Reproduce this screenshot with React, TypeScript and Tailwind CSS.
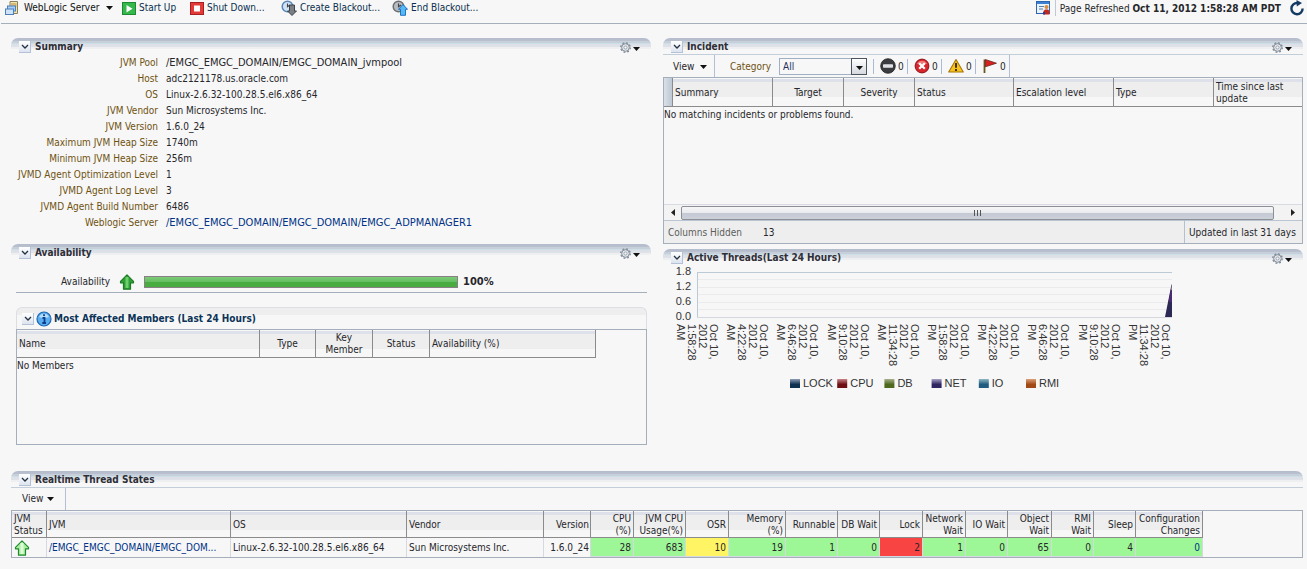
import React from "react";

const HEAD_BG =
  "bg-[linear-gradient(to_bottom,#f7f7f7_0px,#f7f7f7_1px,#dfe1ea_1px,#dfe1ea_4px,#eeeeee_4px,#eeeeee_19px,#f7f7f7_19px)]";

function Caret({ className = "" }: { className?: string }) {
  return (
    <svg className={`h-1 w-[7px] shrink-0 ${className}`} viewBox="0 0 7 4" aria-hidden="true">
      <path d="M0 0H7L3.500 4Z" fill="#111" />
    </svg>
  );
}

function Chevron() {
  return (
    <button
      type="button"
      aria-label="Collapse"
      className="flex size-3 shrink-0 items-center justify-center border-r border-b border-[#b4c2d8] bg-[linear-gradient(to_bottom,#ffffff,#dde4ef)]"
    >
      <svg className="h-[5px] w-[8px]" viewBox="0 0 8 5" aria-hidden="true">
        <path d="M1 1L4 4L7 1" fill="none" stroke="#22303f" strokeWidth="1.3" />
      </svg>
    </button>
  );
}

function Gear() {
  return (
    <button type="button" aria-label="Panel options" className="flex items-center gap-[2px]">
      <svg className="size-[11px]" viewBox="0 0 12 12" aria-hidden="true">
        <circle cx="6" cy="6" r="5.200" fill="none" stroke="#7d8794" strokeWidth="1.4" strokeDasharray="2.042 2.042" />
        <circle cx="6" cy="6" r="4.200" fill="#e3e7ec" stroke="#76818e" strokeWidth="1" />
        <circle cx="6" cy="6" r="1.700" fill="#f7f7f7" stroke="#8e98a4" strokeWidth="0.900" />
      </svg>
      <Caret className="mt-1" />
    </button>
  );
}

function PanelHeader({ title, gear = true }: { title: string; gear?: boolean }) {
  return (
    <div className="flex h-4 items-center rounded-t-[7px] bg-[linear-gradient(to_bottom,#b4bccd_0px,#b9c1cf_3px,#c7cfda_3px,#c7cfda_5px,#cddfe6_5px,#cddfe6_6px,#dcdfe6_6px,#dfe2e8_9px,#eeeff1_9px,#eeeff1_11px,#f7f7f7_11px)] pt-[2px] pr-[11px] pl-2">
      <Chevron />
      <h2 className="grow pl-1 font-bold whitespace-nowrap text-[#2e2e36]">{title}</h2>
      {gear && <Gear />}
    </div>
  );
}

const SUMMARY: [string, string][] = [
  ["Host", "adc2121178.us.oracle.com"],
  ["OS", "Linux-2.6.32-100.28.5.el6.x86_64"],
  ["JVM Vendor", "Sun Microsystems Inc."],
  ["JVM Version", "1.6.0_24"],
  ["Maximum JVM Heap Size", "1740m"],
  ["Minimum JVM Heap Size", "256m"],
  ["JVMD Agent Optimization Level", "1"],
  ["JVMD Agent Log Level", "3"],
  ["JVMD Agent Build Number", "6486"],
];

function Summary() {
  return (
    <section>
      <PanelHeader title="Summary" />
      <dl className="grid grid-cols-[147px_1fr] gap-x-2 pt-px leading-4 whitespace-nowrap">
        <dt className="text-right text-[#6f5210]">JVM Pool</dt>
        <dd className="text-[11px]">/EMGC_EMGC_DOMAIN/EMGC_DOMAIN_jvmpool</dd>
        {SUMMARY.map(([k, v]) => (
          <React.Fragment key={k}>
            <dt className="text-right text-[#6f5210]">{k}</dt>
            <dd>{v}</dd>
          </React.Fragment>
        ))}
        <dt className="text-right text-[#6f5210]">Weblogic Server</dt>
        <dd className="text-[11px]">
          <a href="#server" className="text-[#003286]">
            /EMGC_EMGC_DOMAIN/EMGC_DOMAIN/EMGC_ADPMANAGER1
          </a>
        </dd>
      </dl>
    </section>
  );
}

function UpArrow({ light = false }: { light?: boolean }) {
  return (
    <svg className="size-4 shrink-0" viewBox="0 0 16 16" role="img" aria-label="Up">
      <path
        d="M8 0.800L14.500 7.300V8.800H11.500V15.200H4.500V8.800H1.500V7.300Z"
        fill={light ? "#a9efa0" : "#2fa136"}
        stroke={light ? "#1f8a2b" : "#1d7a25"}
        strokeWidth="1.2"
        strokeLinejoin="round"
      />
      <path d="M8 3V14" stroke={light ? "#e0fbda" : "#6fcf6a"} strokeWidth="3" />
    </svg>
  );
}

function Availability() {
  const th = `h-7 border-r border-b border-[#8b8b8b] pt-px font-normal whitespace-pre-line ${HEAD_BG}`;
  return (
    <section>
      <PanelHeader title="Availability" />
      <div className="mr-1 ml-[5px]">
        <div className="flex h-[33px] items-center border-b border-[#a5aebb] pt-3 pl-[45px]">
          <span className="w-[58px]">Availability</span>
          <UpArrow />
          <div className="ml-[9px] h-3 w-[314px] border border-[#8a7f85] bg-[linear-gradient(to_bottom,#7ccb78_0px,#63bd5f_5px,#48ac41_5px,#48ac41_100%)]" />
          <span className="pl-[5px] text-[11px] font-bold">100%</span>
        </div>
        <div className="mt-[14px] flex h-[22px] items-center rounded-t-[6px] border-x border-t border-[#dcdee4] bg-[linear-gradient(to_bottom,#eeeeee_0px,#eeeeee_7px,#f7f7f7_7px)] pl-[5px]">
          <Chevron />
          <svg className="ml-[2px] size-4" viewBox="0 0 16 16" aria-hidden="true">
            <circle cx="8" cy="8" r="7" fill="#5aaef0" stroke="#1c66b4" strokeWidth="1.2" />
            <path d="M3 6A5.400 5.400 0 0 1 13 6Q8 8 3 6Z" fill="#b5dcfa" />
            <path d="M8 3.200V5M6.500 7H8.500V12M6.300 12H10" stroke="#0c3f8c" strokeWidth="1.800" fill="none" />
          </svg>
          <h3 className="pl-[2px] font-bold whitespace-nowrap text-[#0b3357]">Most Affected Members (Last 24 Hours)</h3>
        </div>
        <div className="h-[116px] border border-[#a5aebb]">
          <table className="w-[579px] table-fixed border-separate border-spacing-0 leading-3">
            <colgroup>
              <col className="w-[243px]" />
              <col className="w-[56px]" />
              <col className="w-[57px]" />
              <col className="w-[57px]" />
              <col className="w-[166px]" />
            </colgroup>
            <thead>
              <tr>
                <th className={`${th} pl-[2px] text-left`}>Name</th>
                <th className={th}>Type</th>
                <th className={th}>{"Key\nMember"}</th>
                <th className={th}>Status</th>
                <th className={`${th} pl-[2px] text-left`}>Availability (%)</th>
              </tr>
            </thead>
            <tbody>
              <tr>
                <td colSpan={5} className="h-4">
                  No Members
                </td>
              </tr>
            </tbody>
          </table>
        </div>
      </div>
    </section>
  );
}

function CountIcon({ kind }: { kind: "fatal" | "critical" | "warning" | "escalated" }) {
  if (kind === "fatal")
    return (
      <svg className="size-4" viewBox="0 0 16 16" role="img" aria-label="Fatal">
        <circle cx="8" cy="8" r="7.300" fill="#3a3c40" stroke="#222" strokeWidth="0.800" />
        <rect x="3" y="6.300" width="10" height="3.400" rx="0.800" fill="#dfe1e4" />
      </svg>
    );
  if (kind === "critical")
    return (
      <svg className="size-4" viewBox="0 0 16 16" role="img" aria-label="Critical">
        <circle cx="8" cy="8" r="6.900" fill="#d6252b" stroke="#8e1519" strokeWidth="1" />
        <path d="M3 6A5.500 5.500 0 0 1 13 6Z" fill="#ee7a78" />
        <path d="M5.200 5.200L10.800 10.800M10.800 5.200L5.200 10.800" stroke="#fff" strokeWidth="2.300" />
      </svg>
    );
  if (kind === "warning")
    return (
      <svg className="size-4" viewBox="0 0 16 16" role="img" aria-label="Warning">
        <path d="M8 1.500L15.300 14H0.700Z" fill="#f7c21d" stroke="#a87708" strokeWidth="1.100" strokeLinejoin="round" />
        <path d="M8 5V9.800M8 11V13" stroke="#3b2c05" strokeWidth="1.900" />
      </svg>
    );
  return (
    <svg className="size-4" viewBox="0 0 16 16" role="img" aria-label="Escalated">
      <path d="M2.500 1.500V15" stroke="#6a5420" strokeWidth="1.800" />
      <path d="M3.400 1.500L14.500 5.200L3.400 8.800Z" fill="#d8201f" stroke="#5a1a14" strokeWidth="0.700" />
    </svg>
  );
}

const KINDS = ["fatal", "critical", "warning", "escalated"] as const;

const INCIDENT_COLS: [string, boolean][] = [
  ["Summary", false],
  ["Target", true],
  ["Severity", true],
  ["Status", false],
  ["Escalation level", false],
  ["Type", false],
  ["Time since last\nupdate", false],
];

function Incident() {
  return (
    <section>
      <PanelHeader title="Incident" />
      <div className="flex h-[23px] items-center border-t border-[#c3cedb]">
        <button type="button" className="flex h-full w-[52px] items-center gap-[6px] border-r border-[#b3bfd2] pt-px pl-[10px]">
          View <Caret />
        </button>
        <label htmlFor="category" className="w-16 pt-px pl-[15px] text-[#6f5210]">
          Category
        </label>
        <div className="relative mr-[6px]">
          <select
            id="category"
            defaultValue="All"
            className="block h-[17px] w-[88px] appearance-none rounded-none border border-[#9fb0c4] bg-[#f7f7f7] pl-[3px] text-[10px] leading-[15px] text-[#22305e]"
          >
            <option>All</option>
          </select>
          <span className="pointer-events-none absolute top-0 right-0 flex h-[17px] w-4 items-center justify-center border border-[#4e545e] bg-[linear-gradient(to_bottom,#ffffff,#d5d9df)] pt-[3px]">
            <Caret />
          </span>
        </div>
        <div className="flex h-full items-center">
          {KINDS.map((k) => (
            <span key={k} className="flex w-[34px] items-center">
              <span className="mr-[6px] h-[15px] w-px bg-[#a9bbd6]" />
              <CountIcon kind={k} />
              <span className="pt-px pl-[2px]">0</span>
            </span>
          ))}
          <span className="h-full w-px bg-[#b3bfd2]" />
        </div>
      </div>
      <div className="border border-[#a5aebb]">
        <div className="h-[127px] border-b border-[#d9dbe3]">
          <table className="w-full table-fixed border-separate border-spacing-0 leading-3">
            <colgroup>
              <col className="w-[9px]" />
              <col className="w-[100px]" />
              <col className="w-[71px]" />
              <col className="w-[71px]" />
              <col className="w-[99px]" />
              <col className="w-[100px]" />
              <col className="w-[100px]" />
              <col />
            </colgroup>
            <thead>
              <tr>
                <th
                  aria-label="Row header"
                  className="h-[29px] border-r border-b border-[#8b8b8b] bg-[linear-gradient(to_right,#d9e0e8,#bcc8d4)]"
                />
                {INCIDENT_COLS.map(([c, centre]) => (
                  <th
                    key={c}
                    className={`h-[29px] border-b border-[#8b8b8b] px-[2px] pt-px font-normal whitespace-pre-line not-last:border-r ${centre ? "text-center" : "text-left"} ${HEAD_BG}`}
                  >
                    {c}
                  </th>
                ))}
              </tr>
            </thead>
            <tbody>
              <tr>
                <td colSpan={8} className="h-4">
                  No matching incidents or problems found.
                </td>
              </tr>
            </tbody>
          </table>
        </div>
        <div className="flex h-[15px] items-center bg-[#f3f3f3]">
          <button type="button" aria-label="Scroll left" className="flex w-[17px] justify-center">
            <svg className="h-[7px] w-1" viewBox="0 0 4 7" aria-hidden="true">
              <path d="M4 0V7L0 3.500Z" fill="#222" />
            </svg>
          </button>
          <div className="flex h-[14px] grow items-center justify-center gap-[2px] rounded-[2px] border border-[#8c8f96] bg-[linear-gradient(to_bottom,#f6f6f7_0px,#e9eaed_6px,#c3c8d3_6px,#ccd0d9_100%)]">
            <span className="h-[6px] w-px bg-[#555]" />
            <span className="h-[6px] w-px bg-[#555]" />
            <span className="h-[6px] w-px bg-[#555]" />
          </div>
          <button type="button" aria-label="Scroll right" className="flex w-7 justify-center pl-[10px]">
            <svg className="h-[7px] w-1" viewBox="0 0 4 7" aria-hidden="true">
              <path d="M0 0V7L4 3.500Z" fill="#222" />
            </svg>
          </button>
        </div>
        <div className="flex h-[23px] items-center border-t border-[#b9c5d3] bg-[#eeeeee]">
          <span className="w-[99px] pt-px pl-1 text-[#5c5c5c]">Columns Hidden</span>
          <span className="grow pt-px">13</span>
          <span className="flex h-full w-[118px] items-center border-l border-[#b3bfd2] pt-px pl-1 whitespace-nowrap">
            Updated in last 31 days
          </span>
        </div>
      </div>
    </section>
  );
}

const TIMES: [string, string][] = [
  ["1:58:28", "AM"],
  ["4:22:28", "AM"],
  ["6:46:28", "AM"],
  ["9:10:28", "AM"],
  ["11:34:28", "AM"],
  ["1:58:28", "PM"],
  ["4:22:28", "PM"],
  ["6:46:28", "PM"],
  ["9:10:28", "PM"],
  ["11:34:28", "PM"],
];

const LEGEND: [string, string, string][] = [
  ["LOCK", "#8f9db5", "#0d2f50"],
  ["CPU", "#c98488", "#6e1013"],
  ["DB", "#a9b08c", "#4f6a1f"],
  ["NET", "#a79fc4", "#2f2560"],
  ["IO", "#8fb9c4", "#215d80"],
  ["RMI", "#dca178", "#a24a16"],
];

function ActiveThreads() {
  return (
    <section>
      <PanelHeader title="Active Threads(Last 24 Hours)" />
      <svg
        className="-mt-[3px] block h-auto w-full font-['Liberation_Sans',sans-serif] text-[11px]"
        viewBox="0 0 640 132"
        role="img"
        aria-label="Active threads over the last 24 hours"
      >
        {[0, 1, 2, 3, 4].map((i) => (
          <rect key={i} x="35" y={17 + Math.round(i * 7.5)} width="474" height="1" fill="#ebebee" />
        ))}
        <rect x="34" y="10" width="475" height="1" fill="#bccad6" />
        <rect x="34" y="10" width="1" height="46" fill="#bccad6" />
        <rect x="34" y="55" width="475" height="1" fill="#d5d7df" />
        <path d="M502 55L508 25L509 22V55Z" fill="#2c2a55" />
        <path d="M505.500 40L509 22V40Z" fill="#4a2a72" />
        <path d="M507.700 28L509 22V28Z" fill="#8d7f86" />
        {["1.8", "1.2", "0.6", "0.0"].map((t, i) => (
          <text key={t} x="28" y={13 + i * 15} textAnchor="end" fill="#333">
            {t}
          </text>
        ))}
        {TIMES.map(([time, half], i) => (
          <g key={i} fill="#333">
            {[half, time, "2012", "Oct 10,"].map((t, j) => (
              <text key={j} transform={`translate(${14 + i * 50 + Math.round(i / 5) + j * 11} 62) rotate(90)`}>
                {t}
              </text>
            ))}
          </g>
        ))}
        <defs>
          {LEGEND.map(([n, a, b]) => (
            <linearGradient key={n} id={`sw-${n}`} x1="0" y1="0" x2="0" y2="1">
              <stop offset="0" stopColor={a} />
              <stop offset="0.6" stopColor={b} />
              <stop offset="1" stopColor={b} />
            </linearGradient>
          ))}
        </defs>
        {LEGEND.map(([n], i) => (
          <g key={n}>
            <rect x={127 + i * 47.2} y="117" width="10" height="9" fill={`url(#sw-${n})`} />
            <text x={140 + i * 47.2} y="125" fill="#333">
              {n}
            </text>
          </g>
        ))}
      </svg>
    </section>
  );
}

type Tone = "green" | "yellow" | "red";
const TONES: Record<Tone, string> = {
  green: "bg-[#9ef796]",
  yellow: "bg-[#fff464]",
  red: "bg-[#f94444]",
};

const STATES: [string, string, Tone, string][] = [
  ["CPU\n(%)", "28", "green", "w-[43px]"],
  ["JVM CPU\nUsage(%)", "683", "green", "w-[52px]"],
  ["OSR", "10", "yellow", "w-[43px]"],
  ["Memory\n(%)", "19", "green", "w-[57px]"],
  ["Runnable", "1", "green", "w-[52px]"],
  ["DB Wait", "0", "green", "w-[42px]"],
  ["Lock", "2", "red", "w-[43px]"],
  ["Network\nWait", "1", "green", "w-[43px]"],
  ["IO Wait", "0", "green", "w-[42px]"],
  ["Object\nWait", "65", "green", "w-[44px]"],
  ["RMI\nWait", "0", "green", "w-[42px]"],
  ["Sleep", "4", "green", "w-[42px]"],
  ["Configuration\nChanges", "0", "green", "w-[67px]"],
];

function ThreadStates() {
  const th = `h-[27px] border-r border-b border-[#8b8b8b] pt-[2px] font-normal whitespace-pre-line ${HEAD_BG}`;
  const td = "h-[19px] border-r border-[#d6d9e2] whitespace-nowrap";
  return (
    <section>
      <PanelHeader title="Realtime Thread States" gear={false} />
      <div className="flex h-[23px] border-t border-[#c3cedb]">
        <button type="button" className="flex w-[55px] items-center gap-1 border-r border-[#b3bfd2] pl-[11px]">
          View <Caret />
        </button>
      </div>
      <div className="border border-[#a5aebb]">
        <table className="w-full table-fixed border-separate border-spacing-0 leading-3">
          <colgroup>
            <col className="w-[35px]" />
            <col className="w-[184px]" />
            <col className="w-[176px]" />
            <col className="w-[137px]" />
            <col className="w-[47px]" />
            {STATES.map(([n, , , w]) => (
              <col key={n} className={w} />
            ))}
            <col />
          </colgroup>
          <thead>
            <tr>
              <th className={`${th} pl-[2px] text-left`}>{"JVM\nStatus"}</th>
              <th className={`${th} pl-[2px] text-left`}>JVM</th>
              <th className={`${th} pl-[2px] text-left`}>OS</th>
              <th className={`${th} pl-[2px] text-left`}>Vendor</th>
              <th className={`${th} pr-px text-right`}>Version</th>
              {STATES.map(([n]) => (
                <th key={n} className={`${th} pr-[2px] text-right`}>
                  {n}
                </th>
              ))}
              <td />
            </tr>
          </thead>
          <tbody>
            <tr>
              <td className={`${td} pl-[2px]`}>
                <UpArrow light />
              </td>
              <td className={`${td} pt-px pl-[2px]`}>
                <a href="#jvm" className="text-[#003286]">
                  /EMGC_EMGC_DOMAIN/EMGC_DOM...
                </a>
              </td>
              <td className={`${td} pt-px pl-[2px]`}>Linux-2.6.32-100.28.5.el6.x86_64</td>
              <td className={`${td} pt-px pl-[2px]`}>Sun Microsystems Inc.</td>
              <td className={`${td} pt-px pr-px text-right`}>1.6.0_24</td>
              {STATES.map(([n, v, tone], i) => (
                <td key={n} className={`${td} border-b pt-[2px] pr-[2px] text-right ${TONES[tone]}`}>
                  {i === STATES.length - 1 ? (
                    <a href="#changes" className="text-[#003286]">
                      {v}
                    </a>
                  ) : (
                    v
                  )}
                </td>
              ))}
              <td />
            </tr>
          </tbody>
        </table>
      </div>
    </section>
  );
}

function ClockIcon({ up = false }: { up?: boolean }) {
  return (
    <svg className="size-4 shrink-0" viewBox="0 0 16 16" aria-hidden="true">
      <circle cx="6.500" cy="6.500" r="5.300" fill={up ? "#b9bcc0" : "#cfe3f5"} stroke={up ? "#6d7073" : "#5b86b5"} strokeWidth="1.500" />
      <path d="M6.500 3.500V6.800L9 5" fill="none" stroke="#444" strokeWidth="1.100" />
      {up ? (
        <path d="M11 4.500L15.500 9.300H13.500V15.300H8.500V9.300H6.500Z" fill="#55b8f7" stroke="#1468b8" strokeWidth="0.900" />
      ) : (
        <path d="M11 15.500L6.500 11H8.500V5H13.500V11H15.500Z" fill="#7b8086" stroke="#33373c" strokeWidth="0.900" />
      )}
    </svg>
  );
}

function TopBar() {
  const item = "flex items-center gap-[3px] whitespace-nowrap text-[#0b2f4f]";
  return (
    <header className="ml-px flex h-6 items-start justify-between border-b border-[#a5aebb] pr-[2px] pl-1">
      <nav className="flex h-4 items-center" aria-label="Server actions">
        <button type="button" className={`${item} mr-[9px] w-[108px]`}>
          <svg className="mr-[2px] size-[14px] shrink-0" viewBox="0 0 14 14" aria-hidden="true">
            <path d="M5 0.500H12.500V12.500H5Z" fill="#f3e3ae" stroke="#8b7f5a" />
            <path d="M6 3H11.500M6 5H11.500" stroke="#b98f3a" />
            <rect x="2.500" y="5" width="8" height="5" fill="#a9cdf2" stroke="#4d7fbd" />
            <rect x="0.500" y="8" width="8" height="5.500" fill="#cfe3f8" stroke="#4d7fbd" />
          </svg>
          <span className="grow text-left text-[#111]">WebLogic Server</span>
          <Caret />
        </button>
        <button type="button" className={`${item} mr-[13px] w-[55px]`}>
          <svg className="size-[14px] shrink-0" viewBox="0 0 14 14" aria-hidden="true">
            <rect x="0.500" y="1.500" width="13" height="12" fill="#35b84b" stroke="#1d8a33" />
            <path d="M4.500 4V11.500L10.500 7.700Z" fill="#fff" />
          </svg>
          Start Up
        </button>
        <button type="button" className={`${item} mr-[13px] w-[78px]`}>
          <svg className="size-[14px] shrink-0" viewBox="0 0 14 14" aria-hidden="true">
            <rect x="0.500" y="1.500" width="13" height="12" fill="#e23a38" stroke="#a91f20" />
            <rect x="4" y="4.500" width="6" height="6" fill="#fff" />
          </svg>
          Shut Down...
        </button>
        <button type="button" className={`${item} mr-[13px] w-[98px]`}>
          <ClockIcon />
          Create Blackout...
        </button>
        <button type="button" className={item}>
          <ClockIcon up />
          End Blackout...
        </button>
      </nav>
      <div className="flex h-4 items-center whitespace-nowrap">
        <svg className="mr-[5px] size-[14px]" viewBox="0 0 14 14" aria-hidden="true">
          <rect x="0.500" y="0.500" width="13" height="12" fill="#eaf2fb" stroke="#2d65b0" />
          <rect x="1" y="1" width="12" height="2" fill="#3d7fd0" />
          <path d="M3 5.500H8M3 8H7" stroke="#5a7ea8" />
          <circle cx="10.500" cy="6" r="2" fill="#d98c3a" />
          <path d="M7.500 13.500V10L9 8.500H12L13.500 10V13.500Z" fill="#c3261c" />
          <path d="M7 13.500V11H9V13.500Z" fill="#24408a" />
        </svg>
        <span className="mr-1 h-4 w-px bg-[#bccad6]" />
        <span className="pt-px">
          Page Refreshed <b>Oct 11, 2012 1:58:28 AM PDT</b>
        </span>
        <button type="button" aria-label="Refresh" className="ml-2">
          <svg className="block size-4" viewBox="0 0 16 16" aria-hidden="true">
            <path d="M13.600 8.500A5.600 5.600 0 1 1 8.500 3" fill="none" stroke="#123a63" strokeWidth="2.400" />
            <path d="M7.500 0L13 3L7.800 6.500Z" fill="#123a63" />
          </svg>
        </button>
      </div>
    </header>
  );
}

export default function App() {
  return (
    <div className="min-h-screen bg-[#f7f7f7] font-['DejaVu_Sans_Condensed',sans-serif] text-[10px] leading-3 text-[#26262b]">
      <TopBar />
      <main className="pt-[14px] pr-1 pb-[11px] pl-[11px]">
        <div className="grid grid-cols-2 gap-x-3">
          <div className="flex flex-col gap-[13px]">
            <Summary />
            <Availability />
          </div>
          <div className="flex flex-col gap-[5px]">
            <Incident />
            <ActiveThreads />
          </div>
        </div>
        <div className="mt-[26px]">
          <ThreadStates />
        </div>
      </main>
    </div>
  );
}
